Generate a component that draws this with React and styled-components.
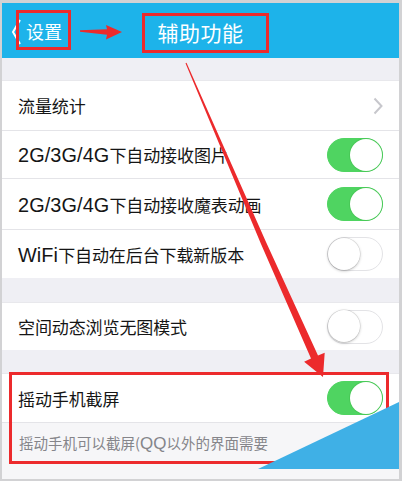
import React from "react";
import styled, { createGlobalStyle } from "styled-components";

const Global = createGlobalStyle`
  html, body { margin: 0; padding: 0; background: #ffffff; }
  body { width: 402px; height: 483px; overflow: hidden; font-family: "Noto Sans CJK SC", "Noto Sans", sans-serif; }
`;

const Page = styled.div`
  position: relative;
  width: 402px;
  height: 483px;
`;

const Frame = styled.div`
  box-sizing: border-box;
  width: 402px;
  height: 481px;
  border: 2px solid #d2d2d4;
  border-top-width: 3px;
  border-right-width: 3px;
  background: #efeff4;
  display: flex;
  flex-direction: column;
  overflow: hidden;
`;

const Header = styled.div`
  position: relative;
  height: 55px;
  flex: none;
  background: #1db3ea;
  display: flex;
  align-items: center;
  justify-content: center;
  color: #fff;
`;

const Back = styled.div`
  position: absolute;
  left: 9px;
  top: 14px;
  display: flex;
  align-items: center;
  gap: 5px;
  font-size: 18px;
  line-height: 28px;
`;

const Title = styled.div`
  font-size: 21px;
  line-height: 30px;
  padding-top: 3px;
  letter-spacing: 0.5px;
`;

const Gap = styled.div`
  flex: none;
  height: ${(p) => p.$h}px;
`;

const Section = styled.div`
  flex: none;
  background: #fff;
  display: flex;
  flex-direction: column;
`;

const Row = styled.div`
  box-sizing: border-box;
  height: ${(p) => p.$h}px;
  display: flex;
  align-items: center;
  justify-content: space-between;
  padding: 0 16px 0 16px;
  border-top: 1px solid #e4e4e8;
  &:first-child { border-top-color: #e8e8ec; }
`;

const Label = styled.span`
  font-size: 17px;
  color: #151515;
  letter-spacing: -0.1px;
`;

const Lat = styled.span`
  font-family: "Liberation Sans", Arial, sans-serif;
  font-size: 1.17em;
  letter-spacing: 0.1px;
`;

const Desc = styled.div`
  flex: 1;
  background: #f6f6f8;
  border-top: 1px solid #e4e4e8;
  padding: 9px 0 0 17px;
  font-size: 14.5px;
  line-height: 22px;
  color: #85858a;
`;

const Switch = styled.div`
  position: relative;
  box-sizing: border-box;
  width: 56px;
  height: 34px;
  border-radius: 17px;
  background: ${(p) => (p.$on ? "#4fd461" : "#ffffff")};
  border: ${(p) => (p.$on ? "1px solid #4fd461" : "1.5px solid #e3e3e6")};
  flex: none;
`;

const Knob = styled.div`
  position: absolute;
  top: ${(p) => (p.$on ? 0 : -0.5)}px;
  ${(p) => (p.$on ? "right: 0;" : "left: -0.5px;")}
  width: 32px;
  height: 32px;
  border-radius: 50%;
  background: #fff;
  box-shadow: ${(p) =>
    p.$on ? "0 0 0 1px rgba(60,180,70,0.35)" : "0 1px 3px rgba(0,0,0,0.25), 0 0 0 0.5px rgba(0,0,0,0.12)"};
`;

const Overlay = styled.svg`
  position: absolute;
  left: 0;
  top: 0;
  pointer-events: none;
`;

const Toggle = ({ on }) => (
  <Switch $on={on}>
    <Knob $on={on} />
  </Switch>
);

const Chevron = () => (
  <svg width="10" height="18" viewBox="0 0 10 18">
    <path d="M1.5 1.5 L8.5 9 L1.5 16.5" fill="none" stroke="#c7c7cc" strokeWidth="2" />
  </svg>
);

export default function App() {
  const red = "#ec2a2c";
  return (
    <Page>
      <Global />
      <Frame>
        <Header>
          <Back>
            <svg width="10" height="28" viewBox="0 0 10 28">
              <path d="M9 3 L2 15 L9 27" fill="none" stroke="#fff" strokeWidth="2" />
            </svg>
            <span>设置</span>
          </Back>
          <Title>辅助功能</Title>
        </Header>
        <Gap $h={22} />
        <Section>
          <Row $h={50}>
            <Label>流量统计</Label>
            <Chevron />
          </Row>
          <Row $h={48}>
            <Label>
              <Lat>2G/3G/4G</Lat>下自动接收图片
            </Label>
            <Toggle on />
          </Row>
          <Row $h={51}>
            <Label>
              <Lat>2G/3G/4G</Lat>下自动接收魔表动画
            </Label>
            <Toggle on />
          </Row>
          <Row $h={49}>
            <Label>
              <Lat>WiFi</Lat>下自动在后台下载新版本
            </Label>
            <Toggle />
          </Row>
        </Section>
        <Gap $h={24} />
        <Section>
          <Row $h={48}>
            <Label>空间动态浏览无图模式</Label>
            <Toggle />
          </Row>
        </Section>
        <Gap $h={23} />
        <Section>
          <Row $h={49}>
            <Label>摇动手机截屏</Label>
            <Toggle on />
          </Row>
        </Section>
        <Desc>
          摇动手机可以截屏(<Lat>QQ</Lat>以外的界面需要
        </Desc>
      </Frame>
      <Overlay width="402" height="483" viewBox="0 0 402 483">
        <rect x="17.5" y="11.5" width="52" height="37" fill="none" stroke={red} strokeWidth="3" />
        <rect x="143.5" y="14.5" width="124" height="37" fill="none" stroke={red} strokeWidth="3" />
        <polygon points="80,30.3 107,29.3 106,25 122,32 106,39.5 107,34.7 80,31.8" fill={red} />
        <rect x="10.5" y="373.5" width="377" height="89" fill="none" stroke={red} strokeWidth="3" />
        <polygon
          points="185.5,63.2 186.5,62.8 266,242 318,355.5 324.7,352.8 323,377 304.1,361.8 311,358.6 261,244"
          fill={red}
        />
        <polygon points="258,469 399,402 399,469" fill="#3fb0e6" />
      </Overlay>
    </Page>
  );
}
